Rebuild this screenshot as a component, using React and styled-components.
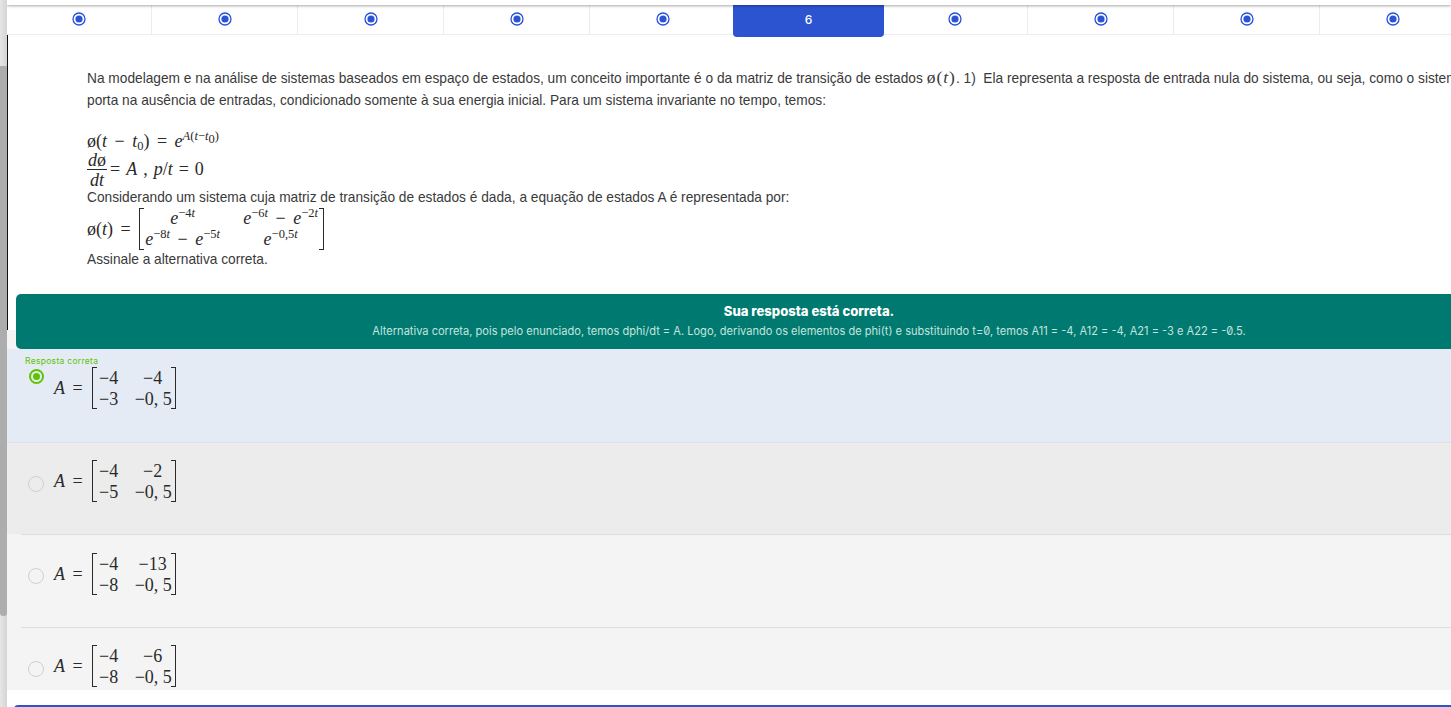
import React from 'react'
import styled, { createGlobalStyle } from 'styled-components'

const GlobalStyle = createGlobalStyle`
  html, body {
    margin: 0;
    height: 707px;
    overflow: hidden;
    background: #fff;
    font-family: 'Liberation Sans', Arial, sans-serif;
  }
`

const Page = styled.div`
  display: flex;
  width: 1451px;
  height: 707px;
  overflow: hidden;
`
const ScrollTrack = styled.div`
  flex: 0 0 7px;
  height: 707px;
  padding-top: 66px;
  box-sizing: border-box;
  background: linear-gradient(90deg, #e6e6e6, #d4d4d4);
`
const ScrollThumb = styled.div`
  height: 550px;
  background: #adadad;
  border-radius: 0 0 3px 3px;
`
const Main = styled.main`
  flex: 1;
  min-width: 0;
  overflow: hidden;
`
const TopStrip = styled.div`
  position: relative;
  z-index: 3;
  height: 5px;
  background: #fff;
  box-shadow: 0 1px 3px rgba(0, 0, 0, 0.35);
`
const Steps = styled.nav`
  display: flex;
  height: 30px;
  margin-left: -1px;
  box-sizing: border-box;
  border-bottom: 1px solid #ececec;
`
const Step = styled.div`
  position: relative;
  flex: 0 0 146px;
  display: flex;
  align-items: center;
  justify-content: center;
  padding-bottom: 2px;
  box-sizing: border-box;
  border-right: 1px solid ${(p) => (p.$plain ? 'transparent' : '#ececec')};
`
const ActiveStep = styled.div`
  position: absolute;
  z-index: 2;
  top: 0;
  bottom: -3px;
  left: -3px;
  right: -3px;
  display: flex;
  align-items: center;
  justify-content: center;
  padding-bottom: 3px;
  background: #2d54d0;
  border-radius: 0 0 4px 4px;
  color: #fff;
  font: 500 12px Inter, sans-serif;
`
const Question = styled.section`
  height: 295px;
  box-sizing: border-box;
  padding: 32px 0 0 79px;
  border-left: 1px solid #111;
  color: #3a3a3a;
  font-size: 13.73px;
  line-height: 22px;
  white-space: nowrap;
`
const Line = styled.div``
const Formulas = styled.div`
  margin-top: 18px;
`
const MathLine = styled.div`
  display: flex;
  align-items: center;
  gap: ${(p) => p.$gap || 0}px;
  height: ${(p) => p.$height}px;
  font: 18px/1 'Liberation Serif', 'Times New Roman', serif;
  word-spacing: 3px;
  color: #2a2a2a;
`
const MathInline = styled.span`
  font: 17.5px 'Liberation Serif', 'Times New Roman', serif;
  letter-spacing: 1px;
`
const TextLine = styled.div`
  height: 17px;
  line-height: 17px;
`
const I = styled.i`
  font-style: italic;
`
const Sup = styled.sup`
  font-size: 12.5px;
  line-height: 0;
  vertical-align: 7px;
  word-spacing: 0;
`
const Sub = styled.sub`
  font-size: 12.5px;
  line-height: 0;
  vertical-align: -3px;
`
const Fraction = styled.span`
  align-self: flex-start;
  display: inline-flex;
  flex-direction: column;
  align-items: center;
  line-height: 17px;
`
const Numerator = styled.span`
  padding: 0 1px;
  border-bottom: 1px solid #2a2a2a;
`
const Denominator = styled.i`
  padding-top: 2px;
`
const FractionRest = styled.span`
  align-self: flex-start;
  margin: 8px 0 0 3px;
  line-height: 18px;
  word-spacing: 1.5px;
`
const MatrixBox = styled.span`
  position: relative;
  display: inline-grid;
  grid-template-columns: ${(p) => p.$cols};
  column-gap: ${(p) => p.$gap}px;
  align-items: center;
  height: 42px;
  padding: 0 5px 0 6px;
  font-family: 'Liberation Serif', 'Times New Roman', serif;
  &::before,
  &::after {
    content: '';
    position: absolute;
    top: 0;
    bottom: 0;
    width: 4px;
    border: 1px solid #2a2a2a;
  }
  &::before {
    left: 0;
    border-right: 0;
  }
  &::after {
    right: 0;
    border-left: 0;
  }
`
const Cell = styled.span`
  text-align: center;
  white-space: nowrap;
  font-size: 18px;
  word-spacing: ${(p) => (p.$wide ? 3 : 0)}px;
`
const FeedbackRow = styled.div`
  height: 19px;
  padding-left: 9px;
  background: #f4f4f4;
`
const Feedback = styled.div`
  position: relative;
  width: 1586px;
  height: 55px;
  top: -36px;
  display: flex;
  flex-direction: column;
  align-items: center;
  padding-top: 10px;
  box-sizing: border-box;
  background: #007a70;
  border-radius: 5px;
  white-space: nowrap;
`
const FeedbackTitle = styled.strong`
  font: 800 13.1px/15px Inter, sans-serif;
  color: #fff;
`
const FeedbackText = styled.span`
  margin-top: 5px;
  font: 400 11.07px/15px Inter, sans-serif;
  font-feature-settings: 'zero';
  color: #c4e4df;
`
const Option = styled.div`
  height: ${(p) => p.$height}px;
  box-sizing: border-box;
  padding: ${(p) => p.$top}px 0 0 21px;
  background: ${(p) => p.$bg};
  border-bottom: ${(p) => (p.$line ? `1px solid ${p.$line}` : 'none')};
  color: #2a2a2a;
`
const CorrectLabel = styled.div`
  margin: 0 0 0 -3px;
  font: 400 8.5px/11px Inter, sans-serif;
  letter-spacing: 0.3px;
  color: #5fc300;
`
const OptionRow = styled.div`
  display: flex;
  align-items: flex-start;
  gap: 10px;
`
const Radio = styled.span`
  flex: 0 0 ${(p) => (p.$checked ? 15 : 16)}px;
  height: ${(p) => (p.$checked ? 15 : 16)}px;
  margin: ${(p) => p.$top}px 0 0 ${(p) => (p.$checked ? 1 : 0)}px;
  box-sizing: border-box;
  display: flex;
  align-items: center;
  justify-content: center;
  border-radius: 50%;
  border: ${(p) => (p.$checked ? '2px solid #5fc300' : '1px solid #d0d0d0')};
  &::after {
    content: '';
    display: ${(p) => (p.$checked ? 'block' : 'none')};
    width: 7px;
    height: 7px;
    border-radius: 50%;
    background: #5fc300;
  }
`
const Equation = styled.span`
  display: flex;
  align-items: center;
  gap: 9px;
  font: 18px/1 'Liberation Serif', 'Times New Roman', serif;
  word-spacing: 3px;
  white-space: nowrap;
`
const DividerBand = styled.div`
  background: #f4f4f4;
`
const Divider = styled.div`
  margin-left: 14px;
  height: 1px;
  background: #ddd;
`
const BottomCard = styled.div`
  height: 15px;
  margin-top: 15px;
  margin-left: 7px;
  border-top: 2px solid #2d54d0;
  border-radius: 4px 0 0 0;
`

const StepDot = () => (
  <svg width='14' height='14' viewBox='0 0 14 14'>
    <circle cx='7' cy='7' r='6' fill='none' stroke='#2350e0' strokeWidth='1.3' />
    <circle cx='7' cy='7' r='3.6' fill='#2d54d0' />
  </svg>
)

const AnswerMatrix = ({ rows }) => (
  <Equation>
    <span>
      <I>A</I> =
    </span>
    <MatrixBox $cols='22px 36px' $gap={15}>
      {rows.flat().map((value, i) => (
        <Cell key={i}>{value}</Cell>
      ))}
    </MatrixBox>
  </Equation>
)

const options = [
  { rows: [['−4', '−4'], ['−3', '−0, 5']], height: 94, top: 7, radioTop: 2, bg: '#e4ebf4', line: '#dde1e7', correct: true },
  { rows: [['−4', '−2'], ['−5', '−0, 5']], height: 91, top: 17, radioTop: 16, bg: '#ececec', divider: true },
  { rows: [['−4', '−13'], ['−8', '−0, 5']], height: 92, top: 18, radioTop: 15, bg: '#f4f4f4', divider: true },
  { rows: [['−4', '−6'], ['−8', '−0, 5']], height: 62, top: 17, radioTop: 16, bg: '#f4f4f4' },
]

const App = () => {
  return (
    <Page>
      <GlobalStyle />
      <ScrollTrack>
        <ScrollThumb />
      </ScrollTrack>
      <Main>
        <TopStrip />
        <Steps>
          {[1, 2, 3, 4, 5, 6, 7, 8, 9, 10].map((n) => (
            <Step key={n} $plain={n === 5 || n === 6}>
              {n === 6 ? <ActiveStep>6</ActiveStep> : <StepDot />}
            </Step>
          ))}
        </Steps>
        <Question>
          <Line>
            Na modelagem e na análise de sistemas baseados em espaço de estados, um conceito importante é o da matriz de transição de estados{' '}
            <MathInline>
              ø(<I>t</I>)
            </MathInline>
            . 1)&nbsp; Ela representa a resposta de entrada nula do sistema, ou seja, como o sistema se com
          </Line>
          <Line>porta na ausência de entradas, condicionado somente à sua energia inicial. Para um sistema invariante no tempo, temos:</Line>
          <Formulas>
            <MathLine $height={22}>
              <span>
                ø(<I>t</I> − <I>t</I>
                <Sub>0</Sub>) = <I>e</I>
                <Sup>
                  <I>A</I>(<I>t</I>−<I>t</I>
                  <Sub>0</Sub>)
                </Sup>
              </span>
            </MathLine>
            <MathLine $height={37}>
              <Fraction>
                <Numerator>
                  <I>d</I>ø
                </Numerator>
                <Denominator>dt</Denominator>
              </Fraction>
              <FractionRest>
                = <I>A</I> , <I>p</I>/<I>t</I> = 0
              </FractionRest>
            </MathLine>
            <TextLine>Considerando um sistema cuja matriz de transição de estados é dada, a equação de estados A é representada por:</TextLine>
            <MathLine $height={45} $gap={8}>
              <span>
                ø(<I>t</I>) =
              </span>
              <MatrixBox $cols='76px 76px' $gap={22}>
                <Cell>
                  <I>e</I>
                  <Sup>−4<I>t</I></Sup>
                </Cell>
                <Cell $wide>
                  <I>e</I>
                  <Sup>−6<I>t</I></Sup> − <I>e</I>
                  <Sup>−2<I>t</I></Sup>
                </Cell>
                <Cell $wide>
                  <I>e</I>
                  <Sup>−8<I>t</I></Sup> − <I>e</I>
                  <Sup>−5<I>t</I></Sup>
                </Cell>
                <Cell>
                  <I>e</I>
                  <Sup>−0,5<I>t</I></Sup>
                </Cell>
              </MatrixBox>
            </MathLine>
            <TextLine>Assinale a alternativa correta.</TextLine>
          </Formulas>
        </Question>
        <FeedbackRow>
          <Feedback>
            <FeedbackTitle>Sua resposta está correta.</FeedbackTitle>
            <FeedbackText>
              Alternativa correta, pois pelo enunciado, temos dphi/dt = A. Logo, derivando os elementos de phi(t) e substituindo t=0, temos A11 = -4, A12 = -4, A21 = -3 e A22 = -0.5.
            </FeedbackText>
          </Feedback>
        </FeedbackRow>
        {options.map((option, i) => (
          <React.Fragment key={i}>
            <Option $height={option.height} $top={option.top} $bg={option.bg} $line={option.line}>
              {option.correct && <CorrectLabel>Resposta correta</CorrectLabel>}
              <OptionRow>
                <Radio $checked={option.correct} $top={option.radioTop} />
                <AnswerMatrix rows={option.rows} />
              </OptionRow>
            </Option>
            {option.divider && (
              <DividerBand>
                <Divider />
              </DividerBand>
            )}
          </React.Fragment>
        ))}
        <BottomCard />
      </Main>
    </Page>
  )
}

export default App
